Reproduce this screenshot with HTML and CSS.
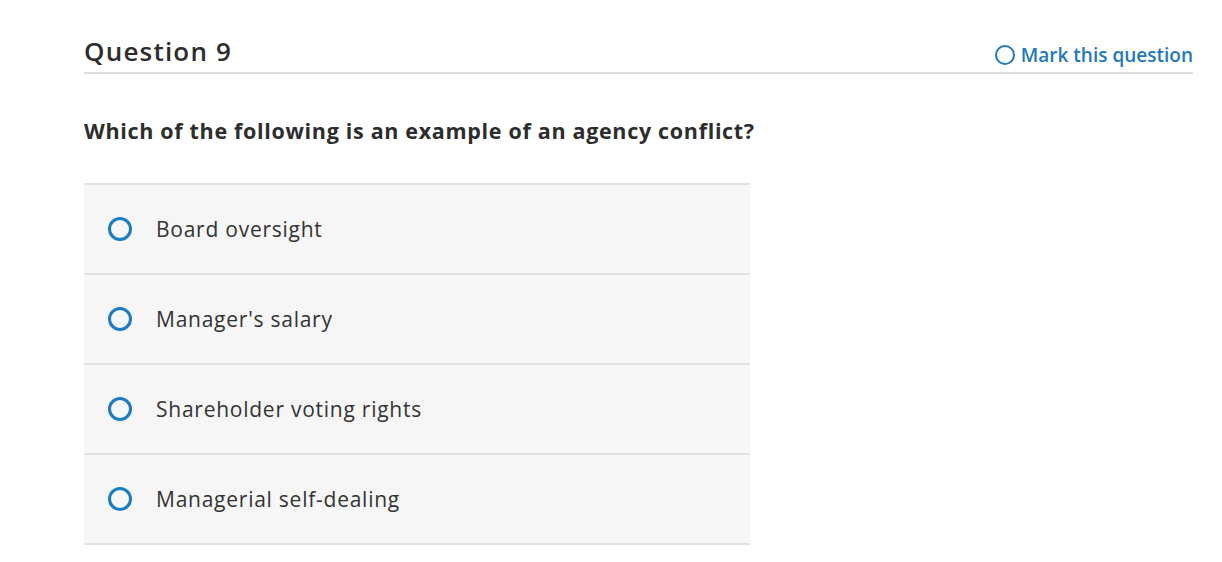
FILE: index.html
```html
<!DOCTYPE html>
<html>
<head>
<meta charset="utf-8">
<link rel="stylesheet" href="styles.css">
</head>
<body>
<div class="page">
  <div class="header">
    <h2 class="title">Question 9</h2>
    <a class="mark"><span class="mark-circle"></span>Mark this question</a>
  </div>
  <p class="prompt">Which of the following is an example of an agency conflict?</p>
  <div class="options">
    <div class="option"><span class="radio"></span><span class="label">Board oversight</span></div>
    <div class="option"><span class="radio"></span><span class="label">Manager's salary</span></div>
    <div class="option"><span class="radio"></span><span class="label">Shareholder voting rights</span></div>
    <div class="option"><span class="radio"></span><span class="label">Managerial self-dealing</span></div>
  </div>
</div>
</body>
</html>
```
FILE: styles.css
```css
html, body { margin: 0; padding: 0; background: #fff; }
body { font-family: "Open Sans", "Lato", sans-serif; color: #333; }
.page { padding: 34px 29px 0 84px; }
.header {
  display: flex;
  justify-content: space-between;
  align-items: flex-end;
  border-bottom: 2px solid #dedee2;
  padding-bottom: 4px;
}
.title { margin: 0; font-size: 26px; font-weight: 600; line-height: 34px; color: #2d2d2d; letter-spacing: 1.2px; }
.mark {
  display: flex; align-items: center; gap: 6px;
  color: #1f78bd; font-size: 19px; font-weight: 600; line-height: 24px;
  margin-bottom: 1px;
}
.mark-circle {
  width: 16px; height: 16px; border: 2px solid #1f78bd; border-radius: 50%; display: inline-block;
}
.prompt { margin: 43px 0 0 0; font-size: 21.5px; font-weight: 700; line-height: 28px; color: #2d2d2d; letter-spacing: 0.68px; }
.options { width: 666px; margin-top: 38px; border-top: 2px solid #e2e2e2; }
.option {
  height: 88px; background: #f6f6f6; border-bottom: 2px solid #e2e2e2;
  display: flex; align-items: center;
}
.radio {
  width: 18px; height: 18px; border: 3px solid #1a7cc3; border-radius: 50%;
  margin-left: 24px; margin-right: 24px; flex: none;
}
.label { font-size: 21px; color: #333; letter-spacing: 0.75px; }
```
